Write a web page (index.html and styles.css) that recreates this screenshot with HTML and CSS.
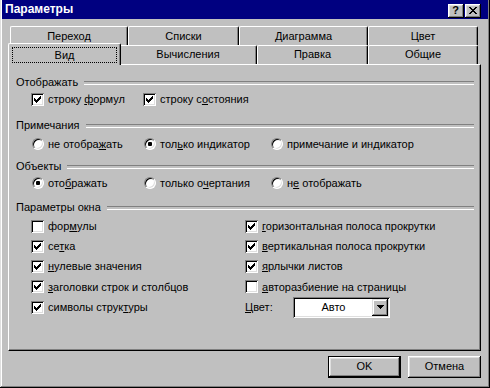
FILE: index.html
```html
<!DOCTYPE html>
<html lang="ru">
<head>
    <meta charset="UTF-8">
    <title>Параметры</title>
    <link rel="stylesheet" href="styles.css">
</head>
<body>
    <div class="window">
        <div class="titlebar">
            <span class="title">Параметры</span>
            <div class="caption-buttons">
                <div class="caption-btn help">?</div>
                <div class="caption-btn">
                    <svg width="8" height="7" viewBox="0 0 8 7" shape-rendering="crispEdges">
                        <path d="M0 0h2v1h-2z M6 0h2v1h-2z M1 1h2v1h-2z M5 1h2v1h-2z M2 2h4v1h-4z M3 3h2v1h-2z M2 4h4v1h-4z M1 5h2v1h-2z M5 5h2v1h-2z M0 6h2v1h-2z M6 6h2v1h-2z" fill="#000"/>
                    </svg>
                </div>
            </div>
        </div>

        <div class="tabs">
            <div class="tab-row back">
                <div class="tab tab-goto">Переход</div>
                <div class="tab tab-lists">Списки</div>
                <div class="tab tab-chart">Диаграмма</div>
                <div class="tab tab-color">Цвет</div>
            </div>
            <div class="tab-row front">
                <div class="tab tab-view selected"><span class="focus">Вид</span></div>
                <div class="tab tab-calc">Вычисления</div>
                <div class="tab tab-edit">Правка</div>
                <div class="tab tab-general">Общие</div>
            </div>
        </div>

        <div class="panel">
            <div class="group-title first">Отображать</div>
            <div class="options">
                <label class="option w1"><span class="check on"></span><span>строку <u>ф</u>ормул</span></label>
                <label class="option"><span class="check on"></span><span>строку с<u>о</u>стояния</span></label>
            </div>

            <div class="group-title second">Примечания</div>
            <div class="options radios">
                <label class="option w1"><span class="radio"></span><span>не отобра<u>ж</u>ать</span></label>
                <label class="option w2"><span class="radio"><i class="dot"></i></span><span>тол<u>ь</u>ко индикатор</span></label>
                <label class="option"><span class="radio"></span><span>примечание и ин<u>д</u>икатор</span></label>
            </div>

            <div class="group-title third">Объекты</div>
            <div class="options">
                <label class="option w1"><span class="radio"><i class="dot"></i></span><span>ото<u>б</u>ражать</span></label>
                <label class="option w2"><span class="radio"></span><span>только о<u>ч</u>ертания</span></label>
                <label class="option"><span class="radio"></span><span>н<u>е</u> отображать</span></label>
            </div>

            <div class="group-title fourth">Параметры окна</div>
            <div class="window-opts">
                <label class="option"><span class="check"></span><span>фор<u>м</u>улы</span></label>
                <label class="option"><span class="check on"></span><span>се<u>т</u>ка</span></label>
                <label class="option"><span class="check on"></span><span><u>н</u>улевые значения</span></label>
                <label class="option"><span class="check on"></span><span><u>з</u>аголовки строк и столбцов</span></label>
                <label class="option"><span class="check on"></span><span>символы струк<u>т</u>уры</span></label>

                <label class="option"><span class="check on"></span><span><u>г</u>оризонтальная полоса прокрутки</span></label>
                <label class="option"><span class="check on"></span><span><u>в</u>ертикальная полоса прокрутки</span></label>
                <label class="option"><span class="check on"></span><span><u>я</u>рлычки листов</span></label>
                <label class="option"><span class="check"></span><span><u>а</u>вторазбиение на страницы</span></label>
                <div class="color-row">
                    <span class="color-label"><u>Ц</u>вет:</span>
                    <div class="select">
                        <span class="select-value">Авто</span>
                        <span class="select-arrow">
                            <svg width="7" height="4" viewBox="0 0 7 4" shape-rendering="crispEdges">
                                <path d="M0 0h7v1h-7z M1 1h5v1h-5z M2 2h3v1h-3z M3 3h1v1h-1z" fill="#000"/>
                            </svg>
                        </span>
                    </div>
                </div>
            </div>
        </div>

        <div class="buttons">
            <div class="push-btn default">OK</div>
            <div class="push-btn">Отмена</div>
        </div>
    </div>
</body>
</html>
```

FILE: styles.css
```css
* {
    box-sizing: border-box;
}
body {
    margin: 0;
    font-family: "Liberation Sans", Arial, sans-serif;
    font-size: 11px;
    color: #000000;
    background-color: #C0C0C0;
}
u {
    text-decoration: underline;
    text-underline-offset: 1px;
}

/* window frame */
.window {
    width: 490px;
    height: 388px;
    padding: 0 2px 2px 2px;
    background-color: #C0C0C0;
    box-shadow: inset -1px -1px #000000, inset 1px 0 #DFDFDF,
        inset -2px -2px #808080, inset 2px 0 #FFFFFF;
}
.titlebar {
    height: 19px;
    background-color: #000080;
    display: flex;
    justify-content: space-between;
    align-items: center;
    padding: 0 7px 0 3px;
}
.title {
    color: #FFFFFF;
    font-weight: bold;
    font-size: 12px;
    margin-top: -1px;
}
.caption-buttons {
    display: flex;
    gap: 1px;
    margin-top: 2px;
}
.caption-btn {
    width: 16px;
    height: 14px;
    background-color: #C0C0C0;
    box-shadow: inset -1px -1px #000000, inset 1px 1px #FFFFFF,
        inset -2px -2px #808080, inset 2px 2px #DFDFDF;
    display: flex;
    justify-content: center;
    align-items: center;
    padding: 0 1px 1px 0;
}
.caption-btn.help {
    font-weight: bold;
    font-size: 11px;
    line-height: 12px;
}

/* tabs */
.tabs {
    margin: 7px 0 0 8px;
}
.tab-row {
    display: flex;
    height: 19px;
    align-items: flex-start;
}
.tab {
    height: 19px;
    line-height: 14px;
    text-align: center;
    background-color: #C0C0C0;
    border-top: 1px solid #FFFFFF;
    border-left: 1px solid #FFFFFF;
    border-right: 1px solid #000000;
    border-radius: 2px 2px 0 0;
    box-shadow: inset -1px 0 #808080;
}
.back .tab {
    padding-top: 2px;
}
.front .tab {
    padding-top: 1px;
}
.tab-goto { width: 118px; }
.tab-lists { width: 111px; }
.tab-chart { width: 129px; }
.tab-color { width: 110px; }
.tab-view { width: 109px; }
.tab-calc { width: 138px; }
.tab-edit { width: 111px; }
.tab-general { width: 110px; }
.front .tab.selected {
    position: relative;
    z-index: 1;
    width: 113px;
    height: 22px;
    margin: -2px -2px 0 -2px;
    padding: 3px 3px 0 3px;
}
.focus {
    display: block;
    height: 16px;
    line-height: 14px;
    border: 1px dotted #000000;
}

/* page panel */
.panel {
    width: 473px;
    height: 287px;
    margin-left: 6px;
    padding: 0 6px 0 7px;
    border-top: 1px solid #FFFFFF;
    border-left: 1px solid #FFFFFF;
    border-right: 1px solid #000000;
    border-bottom: 1px solid #000000;
    box-shadow: inset -1px -1px #808080;
}
.group-title {
    display: flex;
    align-items: center;
    height: 13px;
    line-height: 13px;
}
.group-title::after {
    content: "";
    flex: 1;
    height: 2px;
    margin-left: 6px;
    border-top: 1px solid #808080;
    border-bottom: 1px solid #FFFFFF;
}
.group-title.first { margin-top: 11px; }
.group-title.second { margin-top: 10px; }
.group-title.third { margin-top: 6px; }
.group-title.fourth { margin-top: 8px; }
.options {
    display: flex;
    height: 20px;
    align-items: center;
    padding-left: 15px;
}
.radios {
    margin-top: 2px;
}
.option {
    display: flex;
    align-items: center;
    white-space: nowrap;
}
.w1 { width: 112px; }
.w2 { width: 127px; }

.check {
    width: 13px;
    height: 13px;
    margin-right: 4px;
    background-color: #FFFFFF;
    box-shadow: inset 1px 1px #808080, inset -1px -1px #FFFFFF,
        inset 2px 2px #000000, inset -2px -2px #DFDFDF;
    flex-shrink: 0;
}
.check.on {
    background-image: url("data:image/svg+xml,%3Csvg xmlns='http://www.w3.org/2000/svg' width='7' height='7' shape-rendering='crispEdges'%3E%3Cpath d='M6 0h1v1h-1z M5 1h2v1h-2z M0 2h1v1h-1z M4 2h3v1h-3z M0 3h2v1h-2z M3 3h3v1h-3z M0 4h5v1h-5z M1 5h3v1h-3z M2 6h1v1h-1z' fill='%23000'/%3E%3C/svg%3E");
    background-repeat: no-repeat;
    background-position: 3px 3px;
}
.radio {
    width: 12px;
    height: 12px;
    margin: 0 4px 0 1px;
    border-radius: 50%;
    background-color: #FFFFFF;
    border: 1px solid;
    border-color: #808080 #FFFFFF #FFFFFF #808080;
    box-shadow: inset 1px 1px #000000, inset -1px -1px #DFDFDF;
    display: flex;
    justify-content: center;
    align-items: center;
    flex-shrink: 0;
}
.dot {
    width: 4px;
    height: 4px;
    border-radius: 1px;
    background-color: #000000;
}

.window-opts {
    display: grid;
    grid-template-columns: 214px 1fr;
    grid-template-rows: 20px 20px 20px 21px 20px;
    grid-auto-flow: column;
    align-items: center;
    margin-top: 2px;
    padding-left: 15px;
}
.color-row {
    display: flex;
    align-items: center;
}
.color-label {
    width: 48px;
}
.select {
    width: 97px;
    height: 21px;
    display: flex;
    align-items: center;
    padding: 2px;
    background-color: #FFFFFF;
    box-shadow: inset 1px 1px #808080, inset -1px -1px #FFFFFF,
        inset 2px 2px #000000, inset -2px -2px #DFDFDF;
}
.select-value {
    flex: 1;
    text-align: center;
}
.select-arrow {
    width: 16px;
    height: 17px;
    background-color: #C0C0C0;
    box-shadow: inset -1px -1px #000000, inset 1px 1px #DFDFDF,
        inset -2px -2px #808080, inset 2px 2px #FFFFFF;
    display: flex;
    justify-content: center;
    align-items: center;
}

/* dialog buttons */
.buttons {
    display: flex;
    justify-content: flex-end;
    gap: 7px;
    margin: 5px 7px 0 0;
}
.push-btn {
    width: 73px;
    height: 22px;
    line-height: 20px;
    text-align: center;
    background-color: #C0C0C0;
    box-shadow: inset -1px -1px #000000, inset 1px 1px #FFFFFF,
        inset -2px -2px #808080, inset 2px 2px #DFDFDF;
}
.push-btn.default {
    border: 1px solid #000000;
    line-height: 18px;
}
```
